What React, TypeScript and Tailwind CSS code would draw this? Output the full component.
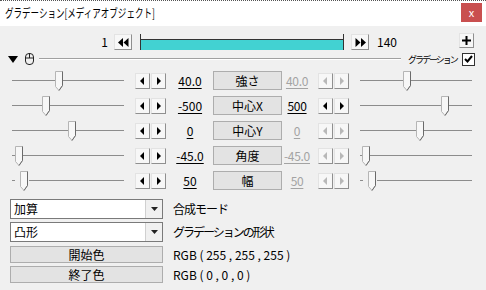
import React from "react";

const F = "font-['Noto_Sans_CJK_JP','Noto_Sans',sans-serif]";

function Slider({ pos, dash }: { pos: number; dash?: boolean }) {
  return (
    <svg width="112" height="25" viewBox="0 0 112 25" className="block">
      {dash ? (
        <>
          <line x1="0" y1="12.5" x2="3" y2="12.5" stroke="#8c8c8c" strokeWidth="1" />
          <line x1={pos + 9} y1="12.5" x2="112" y2="12.5" stroke="#8c8c8c" strokeWidth="1" />
        </>
      ) : (
        <line x1="0" y1="12.5" x2="112" y2="12.5" stroke="#8c8c8c" strokeWidth="1" />
      )}
      <g transform={`translate(${pos + 0.5},3.5)`}>
        <polygon points="0,0 7,0 7,14 3.5,19 0,15" fill="#f7f7f7" stroke="#b5b5b5" strokeWidth="1" />
        <polyline points="7,0 7,14 3.5,19" fill="none" stroke="#6a6a6a" strokeWidth="1" />
      </g>
    </svg>
  );
}

function Tri({ dir, color }: { dir: "l" | "r"; color: string }) {
  return (
    <svg width="5" height="8" viewBox="0 0 5 8">
      {dir === "l" ? (
        <polygon points="4,0 4,8 0,4" fill={color} />
      ) : (
        <polygon points="1,0 1,8 5,4" fill={color} />
      )}
    </svg>
  );
}

function Arrows({ disabled }: { disabled?: boolean }) {
  const c = disabled ? "#b8b8b8" : "#000";
  const b = "w-[15px] h-[16px] flex items-center justify-center bg-[#f7f7f7] border border-[#e3e3e3] border-r-[#8f8f8f] border-b-[#8f8f8f]";
  return (
    <div className="flex w-[31px]">
      <div className={b}>
        <Tri dir="l" color={c} />
      </div>
      <div className={b + " ml-[1px]"}>
        <Tri dir="r" color={c} />
      </div>
    </div>
  );
}

function Row({
  val,
  label,
  rval,
  l,
  r,
  dash,
  en,
}: {
  val: string;
  label: string;
  rval: string;
  l: number;
  r: number;
  dash?: boolean;
  en?: boolean;
}) {
  return (
    <div className="flex items-center h-[25px] pl-[12px]">
      <Slider pos={l} dash={dash} />
      <div className="ml-[11px]">
        <Arrows />
      </div>
      <div className="ml-[4px] w-[40px] text-center text-[12px] text-black underline underline-offset-2 leading-none">{val}</div>
      <div className="ml-[3px] w-[69px] h-[19px] flex items-center justify-center text-[12px] leading-none bg-[#e3e3e3] border border-[#adadad] text-black">
        {label}
      </div>
      <div
        className={
          "w-[30px] text-center text-[12px] underline underline-offset-2 leading-none tracking-[-0.3px] " +
          (en ? "text-black" : "text-[#a3a3a3]")
        }
      >
        {rval}
      </div>
      <div className="ml-[6px]">
        <Arrows disabled={!en} />
      </div>
      <div className="ml-[11px]">
        <Slider pos={r} dash={dash} />
      </div>
    </div>
  );
}

function Dropdown({ text }: { text: string }) {
  return (
    <div className="w-[153px] h-[20px] bg-white border border-[#7a7a7a] flex items-center">
      <div className="flex-1 pl-[3px] text-[12px] leading-none text-black">{text}</div>
      <div className="w-[17px] h-[18px] flex items-center justify-center bg-[#f0f0f0] border-l border-[#d0d0d0]">
        <svg width="7" height="4" viewBox="0 0 7 4">
          <polygon points="0,0 7,0 3.5,4" fill="#222" />
        </svg>
      </div>
    </div>
  );
}

export default function App() {
  return (
    <div className={"w-[486px] h-[290px] bg-[#f0f0f0] overflow-hidden " + F}>
      {/* title bar */}
      <div className="h-[26px] bg-white border-t border-dotted border-[#555] flex items-start">
        <div className="pl-[5px] pt-[4px] text-[12px] text-black leading-[16px] whitespace-nowrap w-[200px]">
          <span className="inline-block origin-left scale-x-[0.71]">グラデーション[メディアオブジェクト]</span>
        </div>
        <div className="ml-auto mr-[4px] mt-[2px] w-[21px] h-[19px] bg-[#c94f4f] flex items-center justify-center text-white text-[11px] leading-none">
          x
        </div>
      </div>
      {/* frame row */}
      <div className="flex items-center h-[16px] mt-[8px]">
        <div className="w-[108px] text-right text-[12px] leading-none text-black">1</div>
        <div className="ml-[6px] w-[18px] h-[16px] flex items-center justify-center bg-[#f7f7f7] border border-[#e3e3e3] border-r-[#8f8f8f] border-b-[#8f8f8f]">
          <svg width="11" height="9" viewBox="0 0 11 9">
            <polygon points="5,0 5,9 0,4.5" fill="#000" />
            <polygon points="10.5,0 10.5,9 5.5,4.5" fill="#000" />
          </svg>
        </div>
        <div className="ml-[8px] w-[204px] h-[16px] flex">
          <div className="w-[1px] h-full bg-[#333]" />
          <div className="flex-1 flex flex-col">
            <div className="h-[5px]" />
            <div className="h-[1px] bg-[#333]" />
            <div className="flex-1 bg-[#42d2d2]" />
          </div>
          <div className="w-[1px] h-full bg-[#333]" />
        </div>
        <div className="ml-[7px] w-[18px] h-[16px] flex items-center justify-center bg-[#f7f7f7] border border-[#e3e3e3] border-r-[#8f8f8f] border-b-[#8f8f8f]">
          <svg width="11" height="9" viewBox="0 0 11 9">
            <polygon points="0.5,0 0.5,9 5.5,4.5" fill="#000" />
            <polygon points="6,0 6,9 11,4.5" fill="#000" />
          </svg>
        </div>
        <div className="ml-[8px] text-[12px] leading-none text-black">140</div>
        <div className="ml-auto mr-[12px] -mt-[4px] w-[15px] h-[15px] flex items-center justify-center bg-[#f7f7f7] border border-[#e3e3e3] border-r-[#8f8f8f] border-b-[#8f8f8f]">
          <svg width="9" height="9" viewBox="0 0 9 9">
            <rect x="3.5" y="0" width="2" height="9" fill="#000" />
            <rect x="0" y="3.5" width="9" height="2" fill="#000" />
          </svg>
        </div>
      </div>
      {/* header row */}
      <div className="flex items-center h-[16px] mt-[1px]">
        <svg width="10" height="7" viewBox="0 0 10 7" className="ml-[8px] shrink-0">
          <polygon points="0,0 10,0 5,7" fill="#000" />
        </svg>
        <svg width="9" height="12" viewBox="0 0 9 12" className="ml-[7px] shrink-0">
          <rect x="0.5" y="0.5" width="8" height="11" rx="3.5" fill="none" stroke="#222" strokeWidth="1" />
          <line x1="0.5" y1="5" x2="8.5" y2="5" stroke="#222" strokeWidth="1" />
          <line x1="4.5" y1="0.5" x2="4.5" y2="5" stroke="#222" strokeWidth="1" />
        </svg>
        <div className="ml-[5px] w-[362px] shrink-0 h-[2px] border-t border-[#a0a0a0] border-b border-b-white" />
        <div className="ml-[7px] w-[50px] shrink-0 whitespace-nowrap text-[9px] tracking-[-2px] leading-none text-black">
          グラデーション
        </div>
        <div className="ml-[4px] shrink-0 w-[13px] h-[13px] bg-white border border-[#333] flex items-center justify-center">
          <svg width="9" height="8" viewBox="0 0 9 8">
            <polyline points="1,4 3.5,6.5 8,1" fill="none" stroke="#000" strokeWidth="2" />
          </svg>
        </div>
      </div>
      {/* slider rows */}
      <div className="mt-[1px]">
        <Row val="40.0" label="強さ" rval="40.0" l={43} r={43} />
        <Row val="-500" label="中心X" rval="500" l={30} r={81} en />
        <Row val="0" label="中心Y" rval="0" l={56} r={56} />
        <Row val="-45.0" label="角度" rval="-45.0" l={3} r={2} />
        <Row val="50" label="幅" rval="50" l={8} r={8} dash />
      </div>
      {/* bottom */}
      <div className="pl-[10px] mt-[6px] flex flex-col">
        <div className="flex items-center">
          <Dropdown text="加算" />
          <div className="ml-[10px] text-[12px] leading-none text-black tracking-[-1px]">合成モード</div>
        </div>
        <div className="flex items-center mt-[3px]">
          <Dropdown text="凸形" />
          <div className="ml-[10px] text-[12px] leading-none text-black tracking-[-2px]">グラデーションの形状</div>
        </div>
        <div className="flex items-center mt-[4px]">
          <div className="w-[153px] h-[17px] flex items-center justify-center bg-[#e3e3e3] border border-[#adadad] text-[12px] leading-none text-black">
            開始色
          </div>
          <div className="ml-[10px] text-[12px] leading-none text-black whitespace-pre">RGB ( 255 , 255 , 255 )</div>
        </div>
        <div className="flex items-center mt-[3px]">
          <div className="w-[153px] h-[17px] flex items-center justify-center bg-[#e3e3e3] border border-[#adadad] text-[12px] leading-none text-black">
            終了色
          </div>
          <div className="ml-[10px] text-[12px] leading-none text-black whitespace-pre">RGB ( 0 , 0 , 0 )</div>
        </div>
      </div>
    </div>
  );
}
